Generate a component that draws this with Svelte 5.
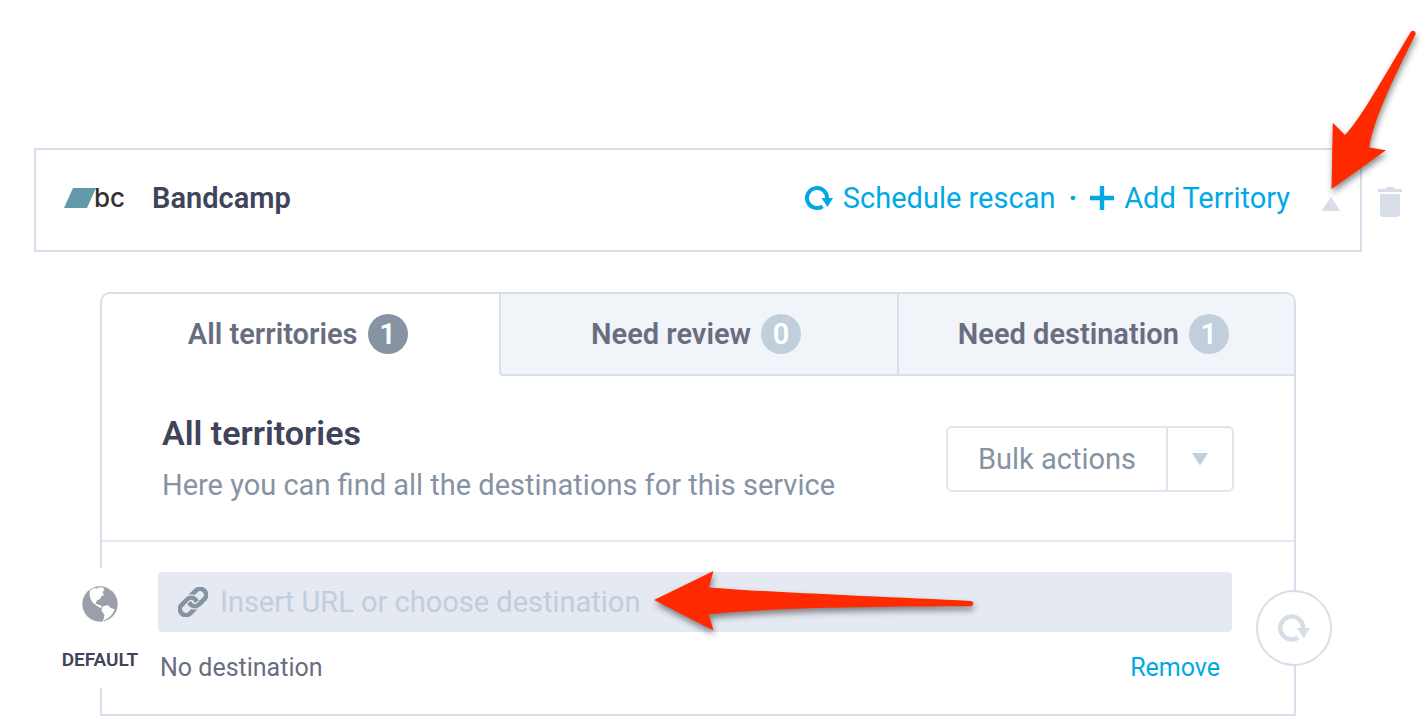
<script lang="ts">
	interface Tab {
		id: string;
		label: string;
		count: number;
	}

	const tabs: Tab[] = [
		{ id: 'all', label: 'All territories', count: 1 },
		{ id: 'review', label: 'Need review', count: 0 },
		{ id: 'destination', label: 'Need destination', count: 1 }
	];

	let active = $state('all');
	let open = $state(true);
	let url = $state('');
</script>

{#snippet rescanIcon(width: number, height: number)}
	<svg {width} {height} viewBox="0 0 28 24" aria-hidden="true">
		<path d="M17.600 20.300A10 10 0 1 1 22 12.500" fill="none" stroke="currentColor" stroke-width="4" />
		<path d="M16.500 12H28l-5.500 9z" fill="currentColor" />
	</svg>
{/snippet}

<main>
	<div class="service-line">
		<section class="service">
			<div class="logo">
				<svg width="30" height="20" viewBox="0 0 30 20" aria-hidden="true">
					<path d="M9 0h23l-9 20H0z" fill="#629aa9" />
				</svg>
				<span>bc</span>
			</div>
			<h1>Bandcamp</h1>
			<div class="actions">
				<button class="action" type="button">
					{@render rescanIcon(28, 24)}
					Schedule rescan
				</button>
				<span class="dot">·</span>
				<button class="action" type="button">
					<svg width="24" height="24" viewBox="0 0 24 24" aria-hidden="true">
						<path d="M12 0v24M0 12h24" stroke="currentColor" stroke-width="4.400" />
					</svg>
					Add Territory
				</button>
			</div>
			<button class="toggle" type="button" aria-label="Toggle service" aria-expanded={open} onclick={() => (open = !open)}>
				<svg width="18" height="14" viewBox="0 0 18 14" aria-hidden="true">
					<path d="M9 .6 17.4 13.4H.6z" fill="currentColor" stroke="currentColor" stroke-linejoin="round" />
				</svg>
				<svg class="pointer down" width="100" height="176" viewBox="0 0 100 176" aria-hidden="true">
					<path d="M82.600 11.200Q84 9 86.500 10.300Q88.500 11.800 87 14.500C74 41 46 94 41.200 126.600L58 129.300 3.500 168 4.800 101.800 17 114C33 98 63 43 82.600 11.200z" />
				</svg>
			</button>
		</section>
		<button class="delete" type="button" aria-label="Delete service">
			<svg width="24" height="30" viewBox="0 0 24 30" aria-hidden="true">
				<path d="M0 2h6.500Q8 0 10 0h4q2 0 3.500 2H24v3H0zM2 7h20v19.500Q22 30 18.500 30h-13Q2 30 2 26.500z" fill="currentColor" />
			</svg>
		</button>
	</div>

	{#if open}
		<section class="panel">
			<div class="tabs" role="tablist">
				{#each tabs as tab (tab.id)}
					<button
						class="tab"
						class:active={tab.id === active}
						type="button"
						role="tab"
						aria-selected={tab.id === active}
						onclick={() => (active = tab.id)}
					>
						{tab.label}
						<span class="count">{tab.count}</span>
					</button>
				{/each}
			</div>

			<header>
				<div class="intro">
					<h2>All territories</h2>
					<p>Here you can find all the destinations for this service</p>
				</div>
				<div class="bulk">
					<button class="bulk-label" type="button">Bulk actions</button>
					<button class="bulk-caret" type="button" aria-label="Open bulk actions">
						<svg width="16" height="12" viewBox="0 0 16 12" aria-hidden="true">
							<path d="M0 0h16L9 11.300Q8 12.600 7 11.300z" fill="currentColor" />
						</svg>
					</button>
				</div>
			</header>

			<div class="row">
				<div class="territory">
					<svg width="36" height="36" viewBox="0 0 36 36" aria-hidden="true">
						<circle cx="18" cy="18" r="17.700" fill="#9a9fa9" />
						<path
							d="M8 4.500 12 2 15 2.500 17 1.300 21 1.500 22.500 4 20.500 6 22 9 19 10.500 18.500 12.500 15 14.500 13.500 17 15.500 18.500 18 19 20 21 18.500 22 15 20 11 17 8.500 13 7.500 8z M20.500 20.500 26 19 28 21.500 33 23.500 30 29.500 24 34.500 21 35.300 22.500 29 19.500 24.500z"
							fill="#fff"
						/>
						<path d="M33 24Q30 31 22 35" fill="none" stroke="#9a9fa9" />
					</svg>
					<strong>DEFAULT</strong>
				</div>
				<div class="destination">
					<label class="field">
						<svg width="30" height="30" viewBox="0 0 30 30" aria-hidden="true">
							<g transform="rotate(-45 15 15)" fill="none" stroke="currentColor" stroke-width="4.600">
								<rect x="11.500" y="9" width="19.500" height="12" rx="6" />
								<path class="halo" d="M10 9h2.500a6 6 0 0 1 6 6" />
								<rect x="-1" y="9" width="19.500" height="12" rx="6" />
								<path class="halo" d="M11.500 15a6 6 0 0 0 6 6h2.500" />
								<path d="M11.500 14v1a6 6 0 0 0 6 6h4" />
							</g>
						</svg>
						<input type="text" aria-label="Destination URL" placeholder="Insert URL or choose destination" bind:value={url} />
						<svg class="pointer across" width="330" height="76" viewBox="0 0 330 76" aria-hidden="true">
							<path d="M4 36 63.500 7 58.800 23.500C130 29 240 33 321 37Q323.500 37.500 323.500 39.700Q323 42 320.500 42.200C235 42.500 125 43 58.800 50.300L63.500 66.500z" />
						</svg>
					</label>
					<div class="status">
						<span>No destination</span>
						<a href="#remove">Remove</a>
					</div>
				</div>
				<button class="rescan" type="button" aria-label="Rescan destination">
					{@render rescanIcon(32, 28)}
				</button>
			</div>
		</section>
	{/if}
</main>

<style>
	:global(body) {
		margin: 0;
		background: #fff;
	}

	main {
		padding: 148px 22px 12px 34px;
		font-family: Roboto, 'Liberation Sans', sans-serif;
		font-size: 29px;
		line-height: 36px;
		color: #686d80;
	}

	button {
		padding: 0;
		border: 0;
		background: none;
		font: inherit;
		color: inherit;
		cursor: pointer;
	}

	svg {
		display: block;
		flex: none;
	}

	h1,
	h2,
	p {
		margin: 0;
	}

	h1,
	h2 {
		font-weight: 600;
		color: #40445a;
	}

	h1 {
		font-size: 29px;
	}

	.service-line {
		display: flex;
		align-items: center;
		gap: 16px;
	}

	.service {
		display: flex;
		flex: 1;
		align-items: center;
		box-sizing: border-box;
		height: 104px;
		padding: 0 20px 4px 28px;
		border: 2px solid #d8dee9;
	}

	.logo {
		display: flex;
		align-items: center;
		width: 62px;
		margin-right: 26px;
		font-family: Inter, sans-serif;
		font-size: 26px;
		line-height: 24px;
		font-weight: 500;
		color: #333;
	}

	.logo svg {
		overflow: visible;
	}

	.actions {
		display: flex;
		align-items: center;
		gap: 13px;
		margin-left: auto;
		color: #00a9e5;
	}

	.action {
		display: flex;
		align-items: center;
		gap: 10px;
	}

	.dot {
		font-weight: 700;
	}

	.toggle {
		position: relative;
		margin: 12px 0 0 32px;
		color: #d8dee8;
	}

	.delete {
		margin-top: 4px;
		color: #d8dee8;
	}

	.pointer {
		position: absolute;
		z-index: 1;
		fill: #ff2a00;
		filter: drop-shadow(1px 4px 3px rgba(0, 0, 0, 0.45));
		pointer-events: none;
	}

	.down {
		right: -88px;
		bottom: 14px;
	}

	.across {
		left: 492px;
		top: -8px;
	}

	.panel {
		margin: 40px 106px 0 66px;
		border: 2px solid #d8dee9;
		border-radius: 10px 10px 0 0;
	}

	.tabs {
		display: grid;
		grid-template-columns: repeat(3, 1fr);
	}

	.tab {
		display: flex;
		align-items: center;
		justify-content: center;
		gap: 10px;
		box-sizing: border-box;
		height: 82px;
		padding-right: 6px;
		border-bottom: 2px solid #d8e0ea;
		border-left: 2px solid #d8e0ea;
		background: #f1f4f9;
		font-weight: 600;
	}

	.tab:first-child {
		border-left: 0;
		border-top-left-radius: 8px;
	}

	.tab:last-child {
		border-top-right-radius: 8px;
	}

	.tab.active {
		border-bottom-color: transparent;
		background: none;
	}

	.active + .tab {
		border-bottom-left-radius: 4px;
	}

	.count {
		width: 40px;
		border-radius: 50%;
		background: #c1cedb;
		font-size: 29px;
		line-height: 40px;
		text-align: center;
		color: #fff;
	}

	.active .count {
		background: #8693a2;
	}

	header {
		display: flex;
		align-items: center;
		justify-content: space-between;
		padding: 37px 60px 35px;
		border-bottom: 2px solid #e4e9f1;
		color: #8693a2;
	}

	h2 {
		margin-bottom: 12px;
		font-size: 34px;
		line-height: 40px;
	}

	.intro p {
		line-height: 40px;
	}

	.bulk {
		display: flex;
		border: 2px solid #dfe4ee;
		border-radius: 6px;
		line-height: 62px;
	}

	.bulk-label {
		padding: 0 30px;
	}

	.bulk-caret {
		display: flex;
		align-items: center;
		justify-content: center;
		width: 66px;
		border-left: 2px solid #dfe4ee;
		color: #c1cedb;
	}

	.row {
		display: flex;
		align-items: center;
		padding: 26px 0;
	}

	.territory {
		display: flex;
		flex-direction: column;
		align-items: center;
		gap: 24px;
		box-sizing: border-box;
		width: 80px;
		height: 120px;
		margin: 0 18px 0 -42px;
		padding-top: 18px;
		background: #fff;
		font-size: 19px;
		line-height: 28px;
		color: #40445a;
	}

	.territory strong {
		font-weight: 600;
	}

	.destination {
		flex: 1;
	}

	.field {
		position: relative;
		display: flex;
		align-items: center;
		gap: 12px;
		height: 60px;
		padding: 0 20px;
		border-radius: 4px;
		background: #e5e9f2;
		color: #8693a2;
	}

	.halo {
		stroke: #e5e9f2;
		stroke-width: 7px;
	}

	input {
		flex: 1;
		min-width: 0;
		padding: 0;
		border: 0;
		outline: 0;
		background: none;
		font: inherit;
		color: #40445a;
	}

	input::placeholder {
		color: #c1cedb;
		opacity: 1;
	}

	.status {
		display: flex;
		justify-content: space-between;
		padding: 20px 12px 0 2px;
		font-size: 25px;
		line-height: 32px;
	}

	a {
		color: #00a9e5;
		text-decoration: none;
	}

	.rescan {
		display: flex;
		align-items: center;
		justify-content: center;
		box-sizing: border-box;
		width: 76px;
		height: 76px;
		margin: 0 -38px 0 24px;
		border: 2px solid #d8dee9;
		border-radius: 50%;
		background: #fff;
		color: #d8dee8;
	}
</style>
